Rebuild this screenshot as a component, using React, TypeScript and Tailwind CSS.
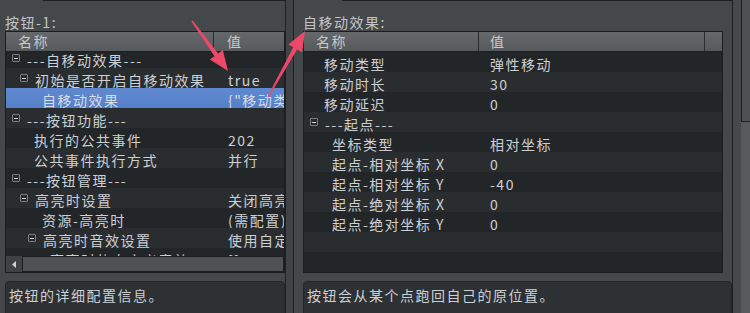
import React from "react";

type Row = {
  level: number;
  group?: boolean;
  name: string;
  value?: string;
  selected?: boolean;
};

const leftRows: Row[] = [
  { level: 0, group: true, name: "---自移动效果---" },
  { level: 1, group: true, name: "初始是否开启自移动效果", value: "true" },
  { level: 2, name: "自移动效果", value: '{"移动类型":"弹性移动"}', selected: true },
  { level: 0, group: true, name: "---按钮功能---" },
  { level: 1, name: "执行的公共事件", value: "202" },
  { level: 1, name: "公共事件执行方式", value: "并行" },
  { level: 0, group: true, name: "---按钮管理---" },
  { level: 1, group: true, name: "高亮时设置", value: "关闭高亮" },
  { level: 2, name: "资源-高亮时", value: "(需配置)" },
  { level: 2, group: true, name: "高亮时音效设置", value: "使用自定义音效" },
  { level: 3, name: "高亮时的自定义音效", value: "[]" },
];

const rightRows: Row[] = [
  { level: 0, name: "移动类型", value: "弹性移动" },
  { level: 0, name: "移动时长", value: "30" },
  { level: 0, name: "移动延迟", value: "0" },
  { level: 0, group: true, name: "---起点---" },
  { level: 1, name: "坐标类型", value: "相对坐标" },
  { level: 1, name: "起点-相对坐标 X", value: "0" },
  { level: 1, name: "起点-相对坐标 Y", value: "-40" },
  { level: 1, name: "起点-绝对坐标 X", value: "0" },
  { level: 1, name: "起点-绝对坐标 Y", value: "0" },
  { level: 0, name: "" },
  { level: 0, name: "" },
];

// 들여쓰기: 그룹은 접기 상자 위치, 항목은 글자 위치
const groupIndent = ["pl-[6px]", "pl-[14px]", "pl-[22px]", "pl-[30px]"];
const leafIndent = ["pl-[20px]", "pl-[28px]", "pl-[36px]", "pl-[44px]"];

function MinusBox() {
  return (
    <span className="mr-[7px] flex h-[8px] w-[8px] shrink-0 items-center justify-center rounded-[1px] border border-[#7a7e82] bg-[#26292b]">
      <span className="h-[1px] w-[4px] bg-[#d8d8d8]" />
    </span>
  );
}

function TreeRow({ row, idx, nameW, valuePad }: { row: Row; idx: number; nameW: string; valuePad: string }) {
  const bg = row.selected
    ? "bg-gradient-to-b from-[#6089d0] to-[#5580c7] text-[#d6dce6]"
    : idx % 2 === 0
      ? "bg-[#232628] text-[#cdd0d3]"
      : "bg-[#2a2d2f] text-[#cdd0d3]";
  return (
    <div className={`flex h-[20px] shrink-0 ${bg}`}>
      <div className={`${nameW} shrink-0 overflow-hidden whitespace-nowrap`}>
        {row.group ? (
          <div className={`flex h-[20px] items-center ${groupIndent[row.level]}`}>
            <MinusBox />
            <span className="h-[20px] pt-[4px] leading-[16px]">{row.name}</span>
          </div>
        ) : (
          <div className={`h-[20px] pt-[4px] leading-[16px] ${leafIndent[row.level]}`}>{row.name}</div>
        )}
      </div>
      <div className={`h-[20px] min-w-0 flex-1 overflow-hidden whitespace-nowrap pt-[4px] leading-[16px] ${valuePad}`}>
        {row.value}
      </div>
    </div>
  );
}

function Header({ right }: { right?: boolean }) {
  return (
    <div className="flex h-[20px] shrink-0 border-b border-[#1d1f21] bg-gradient-to-b from-[#65696c] to-[#565a5d] leading-[19px] text-[#c6c9cc]">
      {right ? (
        <>
          <div className="w-[175px] shrink-0 border-r border-[#2a2c2e] pl-[12px]">名称</div>
          <div className="w-[226px] shrink-0 border-r border-[#2a2c2e] pl-[11px]">值</div>
          <div className="flex-1" />
        </>
      ) : (
        <>
          <div className="w-[208px] shrink-0 border-r border-[#2a2c2e] pl-[12px]">名称</div>
          <div className="flex-1 whitespace-nowrap pl-[13px]">值</div>
        </>
      )}
    </div>
  );
}

function DescBox({ text }: { text: string }) {
  return (
    <div className="mt-[8px] h-[40px] whitespace-nowrap rounded-[4px] border border-[#232629] bg-[#2e3134] pl-[3px] pt-[3px] leading-[20px] text-[#cdd0d3]">
      {text}
    </div>
  );
}

function Arrows() {
  return (
    <svg className="pointer-events-none absolute left-0 top-0" width="750" height="313" viewBox="0 0 750 313">
      <polygon
        points="191.4,21.4 214.5,56.2 209.8,59.5 228,71 222.8,50.1 218.1,53.4 192.6,20.6"
        fill="#ee4868"
      />
      <polygon
        points="267.4,96.7 293.3,47.3 288.3,44.6 305,31 302.1,52.2 297.1,49.5 268.6,97.3"
        fill="#ee4868"
      />
    </svg>
  );
}

export default function App() {
  return (
    <div className="relative flex h-[313px] w-[750px] overflow-hidden bg-[#45484b] font-['Noto_Sans_CJK_SC',sans-serif] text-[14px] tracking-[1.5px]">
      {/* 왼쪽 패널 */}
      <div className="w-[285px] shrink-0 overflow-hidden pl-[5px]">
        <div className="ml-[38px] h-[1px] bg-[#1c1e20]" />
        <div className="mt-[12px] h-[18px] leading-[18px] text-[#c1c5c9]">按钮-1:</div>
        <div className="flex h-[242px] w-[280px] flex-col border border-[#1b1d1f] bg-[#232628]">
          <Header />
          <div className="h-[204px] shrink-0 overflow-hidden">
            <div className="-mt-[4px] flex flex-col">
              {leftRows.map((r, i) => (
                <TreeRow key={i} row={r} idx={i} nameW="w-[208px]" valuePad="pl-[14px]" />
              ))}
            </div>
          </div>
          <div className="flex h-[16px] shrink-0 bg-[#3e4245]">
            <div className="flex w-[16px] items-center justify-center">
              <svg width="4" height="7" viewBox="0 0 4 7">
                <polygon points="4,0 0,3.5 4,7" fill="#cfd2d4" />
              </svg>
            </div>
            <div className="flex-1 border border-[#1c1e20] bg-[#4e5255]" />
          </div>
        </div>
        <DescBox text="按钮的详细配置信息。" />
      </div>
      <div className="w-[1px] shrink-0 bg-[#1e2022]" />
      <div className="w-[7px] shrink-0 bg-[#404346]" />

      {/* 오른쪽 패널 */}
      <div className="w-[440px] shrink-0 border-x border-[#1c1e20] pl-[9px]">
        <div className="ml-[39px] h-[1px] bg-[#1c1e20]" />
        <div className="mt-[12px] h-[18px] leading-[18px] text-[#c1c5c9]">自移动效果:</div>
        <div className="flex h-[242px] w-[420px] flex-col border border-[#1b1d1f] bg-[#232628]">
          <Header right />
          <div className="flex flex-col overflow-hidden">
            {rightRows.map((r, i) => (
              <TreeRow key={i} row={r} idx={i} nameW="w-[175px]" valuePad="pl-[11px]" />
            ))}
          </div>
        </div>
        <DescBox text="按钮会从某个点跑回自己的原位置。" />
      </div>

      {/* 오른쪽 가장자리 */}
      <div className="w-[8px] shrink-0 bg-[#46494c]" />
      <div className="flex w-[9px] shrink-0 flex-col bg-[#575a5d]">
        <div className="h-[122px] border-b border-l border-[#1c1e20] bg-[#4d5154]" />
      </div>

      <Arrows />
    </div>
  );
}
